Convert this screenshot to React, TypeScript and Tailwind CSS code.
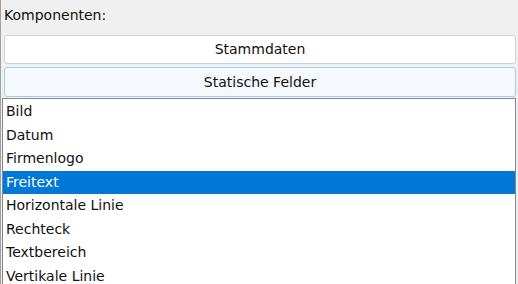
const items = [
  "Bild",
  "Datum",
  "Firmenlogo",
  "Freitext",
  "Horizontale Linie",
  "Rechteck",
  "Textbereich",
  "Vertikale Linie",
];

export default function App() {
  return (
    <div
      className="w-[518px] h-[284px] overflow-hidden bg-[#f0f0f0] border-l border-[#a0a0a0] text-[14px] text-[#111]"
      style={{ fontFamily: '"DejaVu Sans", sans-serif' }}
    >
      <div className="pl-[3px] pt-[7px] h-[35px] leading-[16px]">Komponenten:</div>

      {/* buttons */}
      <div className="flex flex-col gap-[3px] pl-[3px] pr-[2px]">
        <button className="h-[29px] w-full bg-white border border-[#d0d0d0] rounded-[3px] text-center">
          Stammdaten
        </button>
        <button className="h-[30px] w-full bg-[#f5f9fd] border border-[#a8cbe8] rounded-[3px] text-center">
          Statische Felder
        </button>
      </div>

      {/* list */}
      <div className="mt-[1px] ml-[1px] mr-[2px] h-[200px] bg-white border border-[#828790] pt-[1px]">
        {items.map((item) => (
          <div
            key={item}
            className={
              item === "Freitext"
                ? "h-[23.5px] leading-[23.5px] pl-[3px] bg-[#0078d7] text-white"
                : "h-[23.5px] leading-[23.5px] pl-[3px]"
            }
          >
            {item}
          </div>
        ))}
      </div>
    </div>
  );
}
